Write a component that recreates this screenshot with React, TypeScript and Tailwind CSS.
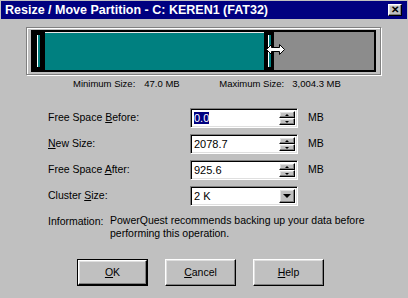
const raised =
  "border border-t-white border-l-white border-r-black border-b-black shadow-[inset_-1px_-1px_0_#808080,inset_1px_1px_0_#dfdfdf] bg-[#c0c0c0]"
const sunken =
  "border border-t-[#808080] border-l-[#808080] border-r-white border-b-white shadow-[inset_1px_1px_0_#000,inset_-1px_-1px_0_#dfdfdf] bg-white"

function Spin({ value, selected }: { value: string; selected?: boolean }) {
  return (
    <div className={`${sunken} flex h-[20px] w-[108px] items-center p-[2px]`}>
      <div className="flex-1 pl-[1px] text-[11px] leading-[13px]">
        <span className={selected ? "bg-[#000080] text-white" : ""}>{value}</span>
      </div>
      <div className="flex h-full w-[16px] flex-col">
        <div className={`${raised} flex flex-1 items-center justify-center`}>
          <div className="h-0 w-0 border-x-[2px] border-b-[2px] border-x-transparent border-b-black" />
        </div>
        <div className={`${raised} flex flex-1 items-center justify-center`}>
          <div className="h-0 w-0 border-x-[2px] border-t-[2px] border-x-transparent border-t-black" />
        </div>
      </div>
    </div>
  )
}

function Row({ label, children, unit }: { label: React.ReactNode; children: React.ReactNode; unit?: boolean }) {
  return (
    <div className="ml-[47px] flex h-[20px] items-center">
      <div className="w-[142px]">{label}</div>
      {children}
      {unit && <div className="ml-[10px]">MB</div>}
    </div>
  )
}

function Handle({ w }: { w: string }) {
  return (
    <div className={`flex h-full ${w} bg-black py-[3px] pl-[4px]`}>
      <div className="w-[1px] bg-white" />
      <div className="w-[2px] bg-[#008080]" />
    </div>
  )
}

export default function App() {
  return (
    <div className="h-[298px] w-[408px] overflow-hidden bg-[#c0c0c0] p-px font-['Liberation_Sans',Arial,sans-serif] text-[10.5px] text-black">
      <div className="flex h-[18px] items-center justify-between bg-[#000080] pl-[4px] pr-[5px]">
        <span className="text-[12.5px] font-bold text-white">Resize / Move Partition - C: KEREN1 (FAT32)</span>
        <div className={`${raised} flex h-[12px] w-[14px] items-center justify-center text-[10px] leading-none font-bold`}>
          ✕
        </div>
      </div>

      <div className="relative ml-[25px] mt-[8px] h-[48px] w-[355px] border border-[#808080] px-[4px] pb-[2px] pt-[2px] shadow-[inset_1px_1px_0_#fff,1px_1px_0_#fff]">
        <div className="flex h-full border-2 border-black">
          <Handle w="w-[12px]" />
          <div className="h-full flex-1 border-t border-[#e8e8e8] bg-[#008080]" />
          <Handle w="w-[10px]" />
          <div className="h-full w-[100px] bg-[#8c8c8c]" />
        </div>
        <svg className="absolute left-[239px] top-[16px]" width="19" height="11" viewBox="0 0 19 11">
          <polygon
            points="0.5,5.5 5.5,0.5 5.5,3.5 13.5,3.5 13.5,0.5 18.5,5.5 13.5,10.5 13.5,7.5 5.5,7.5 5.5,10.5"
            fill="#fff"
            stroke="#000"
            strokeWidth="1"
          />
        </svg>
      </div>

      <div className="mt-[3px] flex h-[13px] items-center text-[9.5px]">
        <span className="ml-[72px]">Minimum Size:</span>
        <span className="ml-[9px] w-[64px]">47.0 MB</span>
        <span className="ml-[11px]">Maximum Size:</span>
        <span className="ml-[8px]">3,004.3 MB</span>
      </div>

      <div className="mt-[17px] flex flex-col gap-[6px]">
        <Row unit label={<>Free Space <span className="underline">B</span>efore:</>}>
          <Spin value="0.0" selected />
        </Row>
        <Row unit label={<><span className="underline">N</span>ew Size:</>}>
          <Spin value="2078.7" />
        </Row>
        <Row unit label={<>Free Space <span className="underline">A</span>fter:</>}>
          <Spin value="925.6" />
        </Row>
        <Row label={<>Cluster <span className="underline">S</span>ize:</>}>
          <div className={`${sunken} flex h-[20px] w-[108px] items-center p-[2px]`}>
            <div className="flex-1 pl-[1px] text-[11px]">2 K</div>
            <div className={`${raised} flex h-full w-[16px] items-center justify-center`}>
              <div className="h-0 w-0 border-x-[4px] border-t-[4px] border-x-transparent border-t-black" />
            </div>
          </div>
        </Row>
      </div>

      <div className="ml-[47px] mt-[8px] flex leading-[13px]">
        <div className="w-[62px] pt-[1px]">Information:</div>
        <div>
          PowerQuest recommends backing up your data before
          <br />
          performing this operation.
        </div>
      </div>

      <div className="ml-[76px] mt-[19px] flex gap-[17px]">
        <div className="border border-black">
          <div className={`${raised} flex h-[25px] w-[69px] items-center justify-center`}>
            <span className="underline">O</span>K
          </div>
        </div>
        <div className={`${raised} flex h-[27px] w-[71px] items-center justify-center`}>
          <span className="underline">C</span>ancel
        </div>
        <div className={`${raised} flex h-[27px] w-[71px] items-center justify-center`}>
          <span className="underline">H</span>elp
        </div>
      </div>
    </div>
  )
}
